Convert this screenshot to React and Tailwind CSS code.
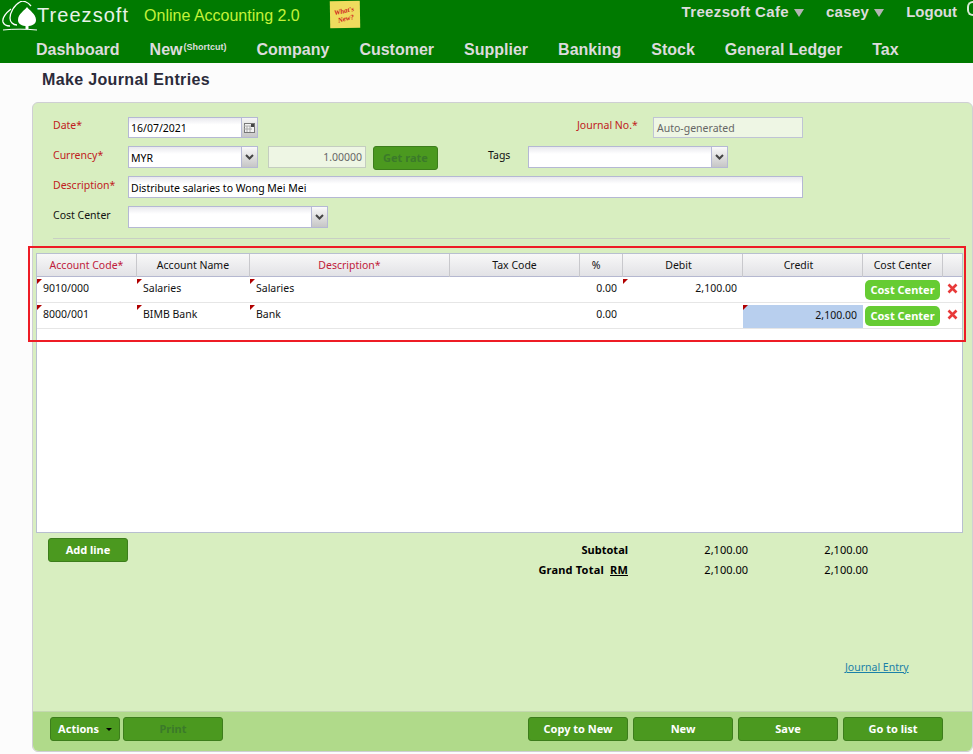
import React from 'react';

const uiFont = "[font-family:'Noto_Sans','DejaVu_Sans',sans-serif]";
const gridCols = 'grid grid-cols-[100px_113px_200px_130px_43px_120px_120px_80px_21px]';

const navItems = ['Dashboard', 'New', 'Company', 'Customer', 'Supplier', 'Banking', 'Stock', 'General Ledger', 'Tax'];

const rows = [
  { code: '9010/000', name: 'Salaries', desc: 'Salaries', pct: '0.00', debit: '2,100.00', credit: '' },
  { code: '8000/001', name: 'BIMB Bank', desc: 'Bank', pct: '0.00', debit: '', credit: '2,100.00' },
];

function Logo() {
  return (
    <svg width="36" height="30" viewBox="0 0 36 30" fill="none" className="shrink-0">
      <path d="M9 8C4 12 0 17 1 21c1 3 4 4 7 4" stroke="#fff" strokeWidth="1.300" />
      <path d="M18 1C12 4 8 12 8 17c0 4 3 7 7 7" stroke="#fff" strokeWidth="1.300" />
      <path d="M18 1c3-2 8 0 11 4" stroke="#fff" strokeWidth="1.300" />
      <path d="M25 6c-2 3-9 7-9 13 0 4 4 6 9 6s9-2 9-6c0-6-7-10-9-13z" fill="#fff" />
      <rect x="23.500" y="23" width="3" height="5" fill="#fff" />
      <path d="M1 29c10-1.200 24-1 34 0" stroke="#fff" strokeWidth="1" />
    </svg>
  );
}

function Chevron() {
  return (
    <svg width="9" height="6" viewBox="0 0 9 6">
      <path d="M1 1l3.500 3.500L8 1" fill="none" stroke="#444" strokeWidth="2" />
    </svg>
  );
}

function Select({ value, className }) {
  return (
    <div className={`flex h-[22px] border border-[#b5b8d4] bg-linear-to-b from-[#e9e9ee] to-white to-[35%] ${className}`}>
      <span className="flex-1 pl-[2px] leading-[22px] text-black">{value}</span>
      <span className="flex w-[16px] items-center justify-center border-l border-[#b5b8d4] bg-linear-to-b from-[#fafafa] to-[#c6c6c6]">
        <Chevron />
      </span>
    </div>
  );
}

function GreenBtn({ children, disabled, className = '' }) {
  return (
    <button className={`h-[24px] rounded-[3px] border border-[#3d7d1c] bg-[#4b991f] text-[11px] font-bold ${disabled ? 'text-[#3b7a2a]' : 'text-white'} ${className}`}>
      {children}
    </button>
  );
}

function Flag() {
  return <span className="absolute top-[2px] left-0 h-0 w-0 border-t-[5px] border-r-[5px] border-t-[#b00000] border-r-transparent" />;
}

function Th({ children, red, className = '' }) {
  return (
    <div className={`border-r border-[#c8c8cc] text-center leading-[23px] ${red ? 'text-[#c0203a]' : 'text-[#111]'} ${className}`}>{children}</div>
  );
}

export default function App() {
  return (
    <div className={`h-[754px] w-[973px] overflow-hidden bg-[#fcfcfc] text-[10.5px] ${uiFont}`}>
      <header className="h-[63px] bg-[#007a00] [font-family:'Liberation_Sans',sans-serif]">
        <div className="flex h-[31px]">
          <div className="mt-[1px] ml-[2px]"><Logo /></div>
          <span className="-ml-[1px] text-[20px] leading-[30px] tracking-[1.05px] text-[#e8f2e8]">Treezsoft</span>
          <span className="ml-[15px] pt-[1px] text-[16px] leading-[30px] text-[#c4f23a]">Online Accounting 2.0</span>
          <div className="mt-[1px] ml-[30px] flex h-[27px] w-[30px] -rotate-1 items-center justify-center bg-[#efdc5e]">
            <span className="block w-[24px] -rotate-12 text-center text-[7px] leading-[8px] font-bold text-[#d02020] italic [font-family:'Liberation_Serif',serif]">What's New?</span>
          </div>
          <div className="ml-auto flex text-[15px] leading-[24px] font-bold text-[#dcdcdc]">
            <span className="tracking-[0.35px]">Treezsoft Cafe</span>
            <span className="mt-[9px] ml-[5px] h-0 w-0 border-x-[5px] border-t-[8px] border-x-transparent border-t-[#b4b4b4]" />
            <span className="ml-[22px] tracking-[0.3px]">casey</span>
            <span className="mt-[9px] ml-[5px] h-0 w-0 border-x-[5px] border-t-[8px] border-x-transparent border-t-[#b4b4b4]" />
            <span className="ml-[22px]">Logout</span>
            <span className="mt-[1px] ml-[10px] h-[15px] w-[6px] rounded-l-full border-2 border-r-0 border-[#d8ecd8]" />
          </div>
        </div>
        <nav className="flex gap-[30px] pt-[9px] pl-[36px] text-[16px] leading-[20px] font-bold text-[#dcdcdc]">
          {navItems.map((item) => (
            <span key={item} className="whitespace-nowrap">
              {item}
              {item === 'New' && <sup className="-top-[5px] ml-[1px] text-[9px]">(Shortcut)</sup>}
            </span>
          ))}
        </nav>
      </header>

      <h1 className="h-[39px] pt-[7px] pl-[42px] text-[16px] leading-[20px] font-bold tracking-[0.35px] text-[#2b2b3a] [font-family:'Liberation_Sans',sans-serif]">Make Journal Entries</h1>

      <main className="ml-[32px] flex h-[650px] w-[941px] flex-col rounded-[6px] border border-[#cfcfd4] bg-[#d8eec0]">
        <div className="relative flex-1">
          <section className="px-[20px] pt-[14px]">
            <div className="flex h-[22px]">
              <label className="w-[75px] pt-[1px] text-[#c02020]">Date*</label>
              <div className="flex h-[21px] w-[130px] border border-[#b5b8d4] bg-linear-to-b from-[#e9e9ee] to-white to-[35%]">
                <span className="flex-1 pl-[2px] leading-[20px] text-black">16/07/2021</span>
                <span className="flex w-[16px] items-center justify-center border-l border-[#b5b8d4] bg-linear-to-b from-[#f6f6f6] to-[#c6c6c6]">
                  <svg width="11" height="10" viewBox="0 0 11 10">
                    <rect x="0.500" y="0.500" width="10" height="9" fill="#f4f4f4" stroke="#777" />
                    <path d="M0 3h8M3 3v6M6 3v6M0 6h8" stroke="#aaa" />
                    <rect x="7" y="1" width="3" height="3" fill="#444" />
                  </svg>
                </span>
              </div>
              <label className="ml-[319px] w-[62px] pt-[1px] text-[#c02020] whitespace-nowrap">Journal No.*</label>
              <div className="ml-[14px] h-[21px] w-[150px] border border-[#bfc4d4] bg-[#eef6e4] pl-[3px] leading-[20px] text-[#666]">Auto-generated</div>
            </div>
            <div className="mt-[7px] flex h-[22px]">
              <label className="w-[75px] pt-[2px] text-[#c02020]">Currency*</label>
              <Select value="MYR" className="w-[130px]" />
              <div className="ml-[10px] h-[22px] w-[98px] border border-[#c4cdc0] bg-[#eef6e4] pr-[3px] text-right leading-[20px] text-[#666]">1.00000</div>
              <GreenBtn disabled className="ml-[7px] w-[65px]">Get rate</GreenBtn>
              <label className="ml-[50px] w-[40px] pt-[2px] text-[#111]">Tags</label>
              <Select value="" className="w-[200px]" />
            </div>
            <div className="mt-[8px] flex h-[22px]">
              <label className="w-[75px] pt-[2px] text-[#c02020]">Description*</label>
              <div className="w-[675px] border border-[#b5b8d4] bg-linear-to-b from-[#e9e9ee] to-white to-[35%] pl-[2px] leading-[22px] text-black">Distribute salaries to Wong Mei Mei</div>
            </div>
            <div className="mt-[8px] flex h-[22px]">
              <label className="w-[75px] pt-[2px] text-[#111]">Cost Center</label>
              <Select value="" className="w-[200px]" />
            </div>
            <div className="mt-[10px] mr-[2px] border-t border-[#c8cfc4]" />
          </section>

          <section className="mt-[14px] ml-[3px] h-[280px] w-[927px] border border-[#b8bfd0] bg-white">
            <div className={`${gridCols} h-[23px] border-b border-[#b5b8d0] bg-linear-to-b from-[#f8f8f8] to-[#e2e2e6]`}>
              <Th red>Account Code*</Th>
              <Th>Account Name</Th>
              <Th red>Description*</Th>
              <Th>Tax Code</Th>
              <Th className="pr-[10px]">%</Th>
              <Th className="pr-[8px]">Debit</Th>
              <Th className="pr-[8px]">Credit</Th>
              <Th>Cost Center</Th>
              <div />
            </div>
            {rows.map((r) => (
              <div key={r.code} className={`${gridCols} h-[26px] border-b border-[#e6e6e6] leading-[22px] text-[#111]`}>
                <div className="relative pl-[6px]"><Flag />{r.code}</div>
                <div className="relative pl-[6px]"><Flag />{r.name}</div>
                <div className="relative pl-[6px]"><Flag />{r.desc}</div>
                <div />
                <div className="pr-[6px] text-right">{r.pct}</div>
                <div className="relative pr-[6px] text-right">{r.debit && <Flag />}{r.debit}</div>
                <div className={`relative pr-[6px] text-right ${r.credit ? 'mt-[2px] bg-[#b8cfee] leading-[20px]' : ''}`}>
                  {r.credit && <span className="absolute top-0 left-0 h-0 w-0 border-t-[5px] border-r-[5px] border-t-[#b00000] border-r-transparent" />}
                  {r.credit}
                </div>
                <div className="flex pt-[3px] pl-[2px]">
                  <button className="h-[20px] w-[75px] rounded-[5px] bg-[#66cc33] text-[11px] leading-[20px] font-bold text-white">Cost Center</button>
                </div>
                <div className="pt-[6px] pl-[4px]">
                  <svg width="11" height="11" viewBox="0 0 11 11">
                    <path d="M1.500 1.500l8 8M9.500 1.500l-8 8" stroke="#e83a3a" strokeWidth="2.600" />
                  </svg>
                </div>
              </div>
            ))}
          </section>

          <section className="flex items-start pt-[5px] pl-[15px]">
            <GreenBtn className="w-[80px]">Add line</GreenBtn>
            <div className="ml-[300px] w-[320px] pt-[2px] text-[11px] leading-[20px] text-black">
              <div className="grid grid-cols-[200px_120px_120px]">
                <span className="text-right font-bold">Subtotal</span>
                <span className="text-right">2,100.00</span>
                <span className="text-right">2,100.00</span>
                <span className="text-right font-bold tracking-[0.2px]">Grand Total <u className="ml-[3px]">RM</u></span>
                <span className="text-right">2,100.00</span>
                <span className="text-right">2,100.00</span>
              </div>
            </div>
          </section>

          <a className="mt-[80px] ml-[812px] block w-[70px] text-[#1a80a8] underline">Journal Entry</a>
        </div>

        <footer className="flex h-[40px] items-start rounded-b-[6px] border-t border-[#c4d8b0] bg-[#b0da8a] pt-[5px] pl-[17px]">
          <GreenBtn className="flex w-[70px] items-center justify-end gap-[7px] pr-[7px]">
            Actions
            <span className="h-0 w-0 border-x-[3px] border-t-[3px] border-x-transparent border-t-black" />
          </GreenBtn>
          <GreenBtn disabled className="ml-[3px] w-[100px]">Print</GreenBtn>
          <GreenBtn className="ml-[305px] w-[100px]">Copy to New</GreenBtn>
          <GreenBtn className="ml-[5px] w-[100px]">New</GreenBtn>
          <GreenBtn className="ml-[5px] w-[100px]">Save</GreenBtn>
          <GreenBtn className="ml-[5px] w-[100px]">Go to list</GreenBtn>
        </footer>
      </main>

      <div className="pointer-events-none absolute top-[246px] left-[28px] h-[96px] w-[938px] border-2 border-[#ee1c25]" />
    </div>
  );
}
